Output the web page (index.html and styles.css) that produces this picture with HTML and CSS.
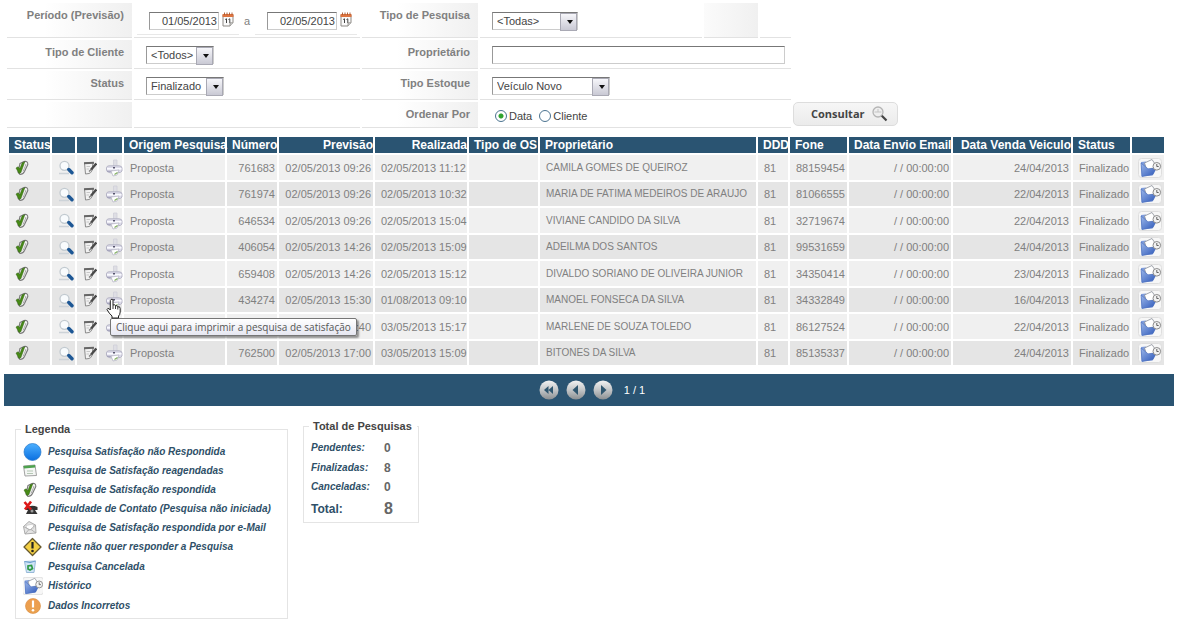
FILE: index.html
```html
<!DOCTYPE html>
<html lang="pt-BR">
<head>
<meta charset="utf-8">
<title>Pesquisa de Satisfação</title>
<link rel="stylesheet" href="styles.css">
</head>
<body>
<svg class="sprite" aria-hidden="true">
  <defs>
    <linearGradient id="g-folder" x1="0" y1="0" x2="1" y2="1"><stop offset="0" stop-color="#9db8ea"/><stop offset="1" stop-color="#2a55b8"/></linearGradient>
    <linearGradient id="g-ball" x1="0" y1="0" x2="0" y2="1"><stop offset="0" stop-color="#4db0ff"/><stop offset="1" stop-color="#0a6fe0"/></linearGradient>
    <linearGradient id="g-pager" x1="0" y1="0" x2="0" y2="1"><stop offset="0" stop-color="#f2f2f2"/><stop offset="0.5" stop-color="#c2c5c7"/><stop offset="1" stop-color="#8b8f92"/></linearGradient>
    <linearGradient id="g-orange" x1="0" y1="0" x2="0" y2="1"><stop offset="0" stop-color="#ee9c4e"/><stop offset="1" stop-color="#e9a24f"/></linearGradient>
  </defs>
  <symbol id="i-check" viewBox="0 0 14 16">
    <path d="M5 3.500 L9 1.500 Q13 .8 12.800 4.500 L9.500 11.500 Q8 14.500 5 14.500 L3 12Z" fill="#f4f4f4" stroke="#777" stroke-width="1.100"/>
    <path d="M10.800 4 Q11 5 8 11.500" fill="none" stroke="#999" stroke-width=".8"/>
    <path d="M1 8 L3.200 6.800 L4.800 8.800 L7.200 2.800 L9.800 1.800 L5.800 12.800 L4 13.500 Z" fill="#478a16" stroke="#2f5f10" stroke-width=".5"/>
  </symbol>
  <symbol id="i-search" viewBox="0 0 16 15">
    <path d="M1 13.500 H11" stroke="#cdd3d8" stroke-width="1.500"/>
    <circle cx="6.500" cy="5.800" r="4.500" fill="#f8fbfd" stroke="#c2cad0" stroke-width="1.300"/>
    <path d="M10.800 9.500 L14 12.800" stroke="#1d5795" stroke-width="3.400" stroke-linecap="round"/>
  </symbol>
  <symbol id="i-edit" viewBox="0 0 14 14">
    <path d="M1.500 2 L10 1.500 L9 9.500 Q8 12 6 12.500 L2.500 13 Z" fill="#f2f2f2" stroke="#8c8c8c"/>
    <path d="M1 2.300 L11 1.700" stroke="#666" stroke-width="2"/>
    <path d="M3.500 5.500 H7 M3.500 8 H6" stroke="#bbb" stroke-width=".8"/>
    <path d="M13.300 2.500 L8 8.800" stroke="#4a4a4a" stroke-width="2.300"/>
    <path d="M8.300 8.300 L6 10.500" stroke="#777" stroke-width="1.200"/>
  </symbol>
  <symbol id="i-print" viewBox="0 0 18 18">
    <path d="M8.500 1 H12 V8 H8.500Z" fill="#dedee4" stroke="#cfcfd8" stroke-width=".8"/>
    <path d="M1.500 8.500 Q2 6.800 4 6.800 H14 Q17 7 17 9 V12 Q16 13.800 13 13.800 H5 Q1.500 13 1.500 11Z" fill="#dcdbe8" stroke="#a9a8bc" stroke-width=".8"/>
    <path d="M2 9.800 H16.500" stroke="#fafaff" stroke-width="1.600"/>
    <path d="M8 8.800 H10" stroke="#55536b" stroke-width="1.500"/>
    <path d="M2 12.300 H8" stroke="#a3a2ba" stroke-width="1.200"/>
    <path d="M6 12 L14 11 L12 16 L8 17Z" fill="#fff" stroke="#b8b8c6" stroke-width=".8"/>
    <path d="M9.500 15.500 L12.500 13.500" stroke="#7fae5c" stroke-width="1.200"/>
  </symbol>
  <symbol id="i-history" viewBox="0 0 24 20">
    <rect x=".5" y=".5" width="23" height="19" rx="3" fill="#f7f7f7" stroke="#dedede"/>
    <path d="M3 4 L8 3.500 L10 8 L18 10 L14.500 17.500 L3.500 18.500Z" fill="#7f9ddc"/>
    <path d="M6.500 5 L14 1.500 L19 9 L9 12.500Z" fill="#fff" stroke="#8a8f99" stroke-width=".8"/>
    <path d="M3 5 L10 10.800 L18.500 9.800 L15 16.500 L4 18.500Z" fill="url(#g-folder)" stroke="#4a6dba" stroke-width=".6"/>
    <circle cx="18.800" cy="8.300" r="3.800" fill="#f2f2f2" stroke="#8b8b8b"/>
    <path d="M18.800 6 V8.500 H20.700" stroke="#555" stroke-width=".9" fill="none"/>
  </symbol>
  <symbol id="i-calendar" viewBox="0 0 12 15">
    <path d="M1 3 H11 V10.500 L8 14 H1Z" fill="#fafafa" stroke="#8e8a86"/>
    <path d="M.5 2 H11.500 V5 H.5Z" fill="#dd7440"/>
    <path d="M2.500 .5V3 M5 .5V3 M7.500 .5V3 M10 .5V3" stroke="#a8562c" stroke-width=".9"/>
    <path d="M3.200 7.500 L4.500 6.800 V11 M6.500 7.500 L7.800 6.800 V11" stroke="#444" fill="none"/>
    <path d="M8 14 V10.800 H11" fill="#d2d2d2" stroke="#8e8a86" stroke-width=".8"/>
  </symbol>
  <symbol id="i-hand" viewBox="0 0 16 21">
    <path d="M5 1.500 Q6.500 .5 7 2 V7 Q9 6 9.500 7.800 Q11.200 7 11.800 8.800 Q14 8 14.200 10.500 V14 Q14 17 12.500 18 V20 H6 V18 Q3 15.500 1 11.500 Q1.500 9.500 3.500 11 L4.300 12 V2.500Z" fill="#fff" stroke="#222" stroke-linejoin="round"/>
    <path d="M7 7V11 M9.500 8V11 M11.800 9V11.500" stroke="#222" stroke-width=".9"/>
  </symbol>
  <symbol id="i-first" viewBox="0 0 20 20"><circle cx="10" cy="10" r="9.500" fill="url(#g-pager)"/><path d="M9.500 6 V14 L5 10Z M14 6 V14 L9.500 10Z" fill="#2f566f"/></symbol>
  <symbol id="i-prev" viewBox="0 0 20 20"><circle cx="10" cy="10" r="9.500" fill="url(#g-pager)"/><path d="M12 5 V15 L6.500 10Z" fill="#2f566f"/></symbol>
  <symbol id="i-next" viewBox="0 0 20 20"><circle cx="10" cy="10" r="9.500" fill="url(#g-pager)"/><path d="M8 5 V15 L13.500 10Z" fill="#2f566f"/></symbol>
</svg>

<main class="page">
  <form class="filters">
    <label class="name" for="date-from">Período (Previsão)</label>
    <div class="value dates">
      <span class="date"><input class="text" id="date-from" value="01/05/2013"><svg class="calendar"><use href="#i-calendar"/></svg></span>
      <span class="until">a</span>
      <span class="date"><input class="text" value="02/05/2013" aria-label="Data final"><svg class="calendar"><use href="#i-calendar"/></svg></span>
    </div>
    <label class="name" for="survey">Tipo de Pesquisa</label>
    <div class="value first"><span class="select survey"><select id="survey"><option>&lt;Todas&gt;</option></select></span></div>
    <div class="name spare"></div>
    <div class="value"></div>

    <label class="name row-start" for="client">Tipo de Cliente</label>
    <div class="value"><span class="select client"><select id="client"><option>&lt;Todos&gt;</option></select></span></div>
    <label class="name" for="owner">Proprietário</label>
    <div class="value wide"><input class="text owner" id="owner"></div>

    <label class="name row-start" for="status">Status</label>
    <div class="value"><span class="select status"><select id="status"><option>Finalizado</option></select></span></div>
    <label class="name" for="stock">Tipo Estoque</label>
    <div class="value wide"><span class="select stock"><select id="stock"><option>Veículo Novo</option></select></span></div>

    <div class="name row-start"></div>
    <div class="value"></div>
    <div class="name">Ordenar Por</div>
    <div class="value wide radios">
      <label><input type="radio" name="order" checked>Data</label>
      <label><input type="radio" name="order">Cliente</label>
    </div>
    <button class="submit" type="button">Consultar
      <svg class="lens" viewBox="0 0 16 16"><circle cx="6" cy="6" r="5" fill="#eee" stroke="#b5b5b5" stroke-width="1.300"/><path d="M2.500 6 H9.500 M6 3V6" stroke="#c4c4c4"/><path d="M9.800 9.800 L14.500 14.500" stroke="#444" stroke-width="2.200"/></svg>
    </button>
  </form>

  <table class="results">
    <colgroup>
      <col class="c-41"><col class="c-23"><col class="c-20"><col class="c-23"><col class="c-101"><col class="c-50"><col class="c-94"><col class="c-92"><col class="c-69"><col class="c-216"><col class="c-30"><col class="c-57"><col class="c-102"><col class="c-118"><col class="c-57"><col class="c-32">
    </colgroup>
    <thead>
      <tr><th>Status</th><th></th><th></th><th></th><th>Origem Pesquisa</th><th class="num">Número</th><th class="num">Previsão</th><th class="num">Realizada</th><th>Tipo de OS</th><th>Proprietário</th><th>DDD</th><th>Fone</th><th class="num">Data Envio Email</th><th class="num">Data Venda Veiculo</th><th>Status</th><th></th></tr>
    </thead>
    <tbody>
      <tr><td><svg class="check"><use href="#i-check"/></svg></td><td><svg class="search"><use href="#i-search"/></svg></td><td><svg class="edit"><use href="#i-edit"/></svg></td><td><svg class="print"><use href="#i-print"/></svg></td><td>Proposta</td><td class="num">761683</td><td class="num">02/05/2013 09:26</td><td class="num">02/05/2013 11:12</td><td></td><td class="person">CAMILA GOMES DE QUEIROZ</td><td>81</td><td>88159454</td><td class="num">/ / 00:00:00</td><td class="num">24/04/2013</td><td>Finalizado</td><td><svg class="history"><use href="#i-history"/></svg></td></tr>
      <tr><td><svg class="check"><use href="#i-check"/></svg></td><td><svg class="search"><use href="#i-search"/></svg></td><td><svg class="edit"><use href="#i-edit"/></svg></td><td><svg class="print"><use href="#i-print"/></svg></td><td>Proposta</td><td class="num">761974</td><td class="num">02/05/2013 09:26</td><td class="num">02/05/2013 10:32</td><td></td><td class="person">MARIA DE FATIMA MEDEIROS DE ARAUJO</td><td>81</td><td>81066555</td><td class="num">/ / 00:00:00</td><td class="num">22/04/2013</td><td>Finalizado</td><td><svg class="history"><use href="#i-history"/></svg></td></tr>
      <tr><td><svg class="check"><use href="#i-check"/></svg></td><td><svg class="search"><use href="#i-search"/></svg></td><td><svg class="edit"><use href="#i-edit"/></svg></td><td><svg class="print"><use href="#i-print"/></svg></td><td>Proposta</td><td class="num">646534</td><td class="num">02/05/2013 09:26</td><td class="num">02/05/2013 15:04</td><td></td><td class="person">VIVIANE CANDIDO DA SILVA</td><td>81</td><td>32719674</td><td class="num">/ / 00:00:00</td><td class="num">22/04/2013</td><td>Finalizado</td><td><svg class="history"><use href="#i-history"/></svg></td></tr>
      <tr><td><svg class="check"><use href="#i-check"/></svg></td><td><svg class="search"><use href="#i-search"/></svg></td><td><svg class="edit"><use href="#i-edit"/></svg></td><td><svg class="print"><use href="#i-print"/></svg></td><td>Proposta</td><td class="num">406054</td><td class="num">02/05/2013 14:26</td><td class="num">02/05/2013 15:09</td><td></td><td class="person">ADEILMA DOS SANTOS</td><td>81</td><td>99531659</td><td class="num">/ / 00:00:00</td><td class="num">24/04/2013</td><td>Finalizado</td><td><svg class="history"><use href="#i-history"/></svg></td></tr>
      <tr><td><svg class="check"><use href="#i-check"/></svg></td><td><svg class="search"><use href="#i-search"/></svg></td><td><svg class="edit"><use href="#i-edit"/></svg></td><td><svg class="print"><use href="#i-print"/></svg></td><td>Proposta</td><td class="num">659408</td><td class="num">02/05/2013 14:26</td><td class="num">02/05/2013 15:12</td><td></td><td class="person">DIVALDO SORIANO DE OLIVEIRA JUNIOR</td><td>81</td><td>34350414</td><td class="num">/ / 00:00:00</td><td class="num">23/04/2013</td><td>Finalizado</td><td><svg class="history"><use href="#i-history"/></svg></td></tr>
      <tr><td><svg class="check"><use href="#i-check"/></svg></td><td><svg class="search"><use href="#i-search"/></svg></td><td><svg class="edit"><use href="#i-edit"/></svg></td><td class="hovered"><svg class="print"><use href="#i-print"/></svg><span class="tooltip" role="tooltip">Clique aqui para imprimir a pesquisa de satisfação</span><svg class="hand"><use href="#i-hand"/></svg></td><td>Proposta</td><td class="num">434274</td><td class="num">02/05/2013 15:30</td><td class="num">01/08/2013 09:10</td><td></td><td class="person">MANOEL FONSECA DA SILVA</td><td>81</td><td>34332849</td><td class="num">/ / 00:00:00</td><td class="num">16/04/2013</td><td>Finalizado</td><td><svg class="history"><use href="#i-history"/></svg></td></tr>
      <tr><td><svg class="check"><use href="#i-check"/></svg></td><td><svg class="search"><use href="#i-search"/></svg></td><td><svg class="edit"><use href="#i-edit"/></svg></td><td><svg class="print"><use href="#i-print"/></svg></td><td></td><td></td><td class="num">:40</td><td class="num">03/05/2013 15:17</td><td></td><td class="person">MARLENE DE SOUZA TOLEDO</td><td>81</td><td>86127524</td><td class="num">/ / 00:00:00</td><td class="num">22/04/2013</td><td>Finalizado</td><td><svg class="history"><use href="#i-history"/></svg></td></tr>
      <tr><td><svg class="check"><use href="#i-check"/></svg></td><td><svg class="search"><use href="#i-search"/></svg></td><td><svg class="edit"><use href="#i-edit"/></svg></td><td><svg class="print"><use href="#i-print"/></svg></td><td>Proposta</td><td class="num">762500</td><td class="num">02/05/2013 17:00</td><td class="num">03/05/2013 15:09</td><td></td><td class="person">BITONES DA SILVA</td><td>81</td><td>85135337</td><td class="num">/ / 00:00:00</td><td class="num">24/04/2013</td><td>Finalizado</td><td><svg class="history"><use href="#i-history"/></svg></td></tr>
    </tbody>
  </table>

  <nav class="pager">
    <button type="button" aria-label="Primeira página"><svg><use href="#i-first"/></svg></button>
    <button type="button" aria-label="Página anterior"><svg><use href="#i-prev"/></svg></button>
    <button type="button" aria-label="Próxima página"><svg><use href="#i-next"/></svg></button>
    <span class="count">1 / 1</span>
  </nav>

  <div class="panels">
    <fieldset class="panel legend">
      <legend>Legenda</legend>
      <ul>
        <li><svg viewBox="0 0 20 20"><circle cx="9.500" cy="10" r="8.500" fill="url(#g-ball)" stroke="#2a78c8" stroke-width=".7"/></svg>Pesquisa Satisfação não Respondida</li>
        <li><svg viewBox="0 0 20 20"><path d="M.5 5 L12 4 L13.500 14.500 L2 15Z" fill="#f4f6f4" stroke="#999" stroke-width=".9"/><path d="M.5 5 L12 4 L12.200 6.500 L1 7.500Z" fill="#4ea24e"/><path d="M4 10 H10 M4 12.500 H10" stroke="#b5c8b5"/></svg>Pesquisa de Satisfação reagendadas</li>
        <li><svg viewBox="0 -2 20 20"><use href="#i-check" width="14" height="16"/></svg>Pesquisa de Satisfação respondida</li>
        <li><svg viewBox="0 0 20 20"><path d="M3 9 Q8 5 14.500 8 V11 H12 L14.500 15 H3 L5 11 H3Z" fill="#333"/><circle cx="9" cy="12" r="1.500" fill="#999"/><path d="M1.500 3 L8 10.500 M8 2.500 L2 10.500" stroke="#dd1a1a" stroke-width="2.600"/></svg>Dificuldade de Contato (Pesquisa não iniciada)</li>
        <li><svg viewBox="0 0 20 20"><path d="M.5 8.500 L6 3.500 L12.500 7 L13 15 L2 16Z" fill="#e4e4e4" stroke="#a5a5a5" stroke-width=".9"/><path d="M3 7.500 L10 6 L11 10 L7 12 L3.500 10Z" fill="#fff" stroke="#bbb" stroke-width=".6"/><path d="M.5 8.500 L7 12 L12.500 7 M2 16 L6 11.500 M13 15 L8 11.500" fill="none" stroke="#a5a5a5" stroke-width=".8"/></svg>Pesquisa de Satisfação respondida por e-Mail</li>
        <li class="tall"><svg viewBox="0 0 20 20"><path d="M9.500 1.500 L18 10 L9.500 18.500 L1 10Z" fill="#f3cf45" stroke="#66582b" stroke-width="1.300" stroke-linejoin="round"/><path d="M9.500 5 V11.500" stroke="#222" stroke-width="2.200"/><circle cx="9.500" cy="14" r="1.300" fill="#222"/></svg>Cliente não quer responder a Pesquisa</li>
        <li><svg viewBox="0 0 20 20"><path d="M1.500 4.500 L12.500 4 L11 15.500 H3.500Z" fill="#cfe4f6" stroke="#8fb2d4" stroke-width=".9"/><path d="M1.500 4.500 Q7 7 12.500 4" fill="none" stroke="#6fa0d0"/><path d="M5 12 L5 9 L8.500 8.500 L9.500 11.500 L7 13Z" fill="none" stroke="#2f9a45" stroke-width="1.700"/></svg>Pesquisa Cancelada</li>
        <li class="tall"><svg viewBox="1 0 22 20"><use href="#i-history" width="24" height="20"/></svg>Histórico</li>
        <li class="tall"><svg viewBox="0 0 20 20"><circle cx="10" cy="10" r="7.500" fill="url(#g-orange)" stroke="#d98a3c" stroke-width=".6"/><path d="M10 4.500 V11.500" stroke="#fff" stroke-width="2.200"/><circle cx="10" cy="14.200" r="1.300" fill="#fff"/></svg>Dados Incorretos</li>
      </ul>
    </fieldset>

    <fieldset class="panel totals">
      <legend>Total de Pesquisas</legend>
      <dl>
        <dt>Pendentes:</dt><dd>0</dd>
        <dt>Finalizadas:</dt><dd>8</dd>
        <dt>Canceladas:</dt><dd>0</dd>
        <dt class="sum">Total:</dt><dd class="sum">8</dd>
      </dl>
    </fieldset>
  </div>
</main>
</body>
</html>
```
FILE: styles.css
```css
* { box-sizing: border-box; }

body {
  margin: 0;
  background: #fff;
  color: #808080;
  font: 11px/14px "Liberation Sans", Arial, sans-serif;
}

.sprite { position: absolute; width: 0; height: 0; }
svg { display: block; flex: none; }
.page { padding: 3px 4px 6px; }

/* Filters */
.filters {
  display: grid;
  grid-template-columns: 125px 226px 116px 222px 54px 31px auto;
  grid-template-rows: minmax(35px, auto) minmax(29px, auto) minmax(29px, auto) minmax(26px, auto);
  gap: 2px;
  justify-content: start;
  margin: 0 3px;
}
.name {
  padding: 5px 8px 0;
  border-bottom: 1px solid #e2e2e2;
  background: linear-gradient(to right, #fff 30%, #f0f0f0);
  color: #808080;
  font-weight: bold;
  text-align: right;
  white-space: nowrap;
}
.name.spare { background: linear-gradient(to right, #fbfbfb, #f0f0f0); }
.row-start { grid-column: 1; }
.value {
  display: flex;
  align-items: flex-start;
  padding: 6px 6px 4px 12px;
  border-bottom: 1px solid #e2e2e2;
}
.value.first { padding-top: 9px; }
.value.wide { grid-column: 4 / span 3; }
.value.dates { padding: 0 3px; justify-content: space-between; }
.date {
  display: flex;
  gap: 3px;
  width: 102px;
  padding: 9px 0 4px 12px;
  border-bottom: 1px solid #e8e8e8;
}
.until { padding-top: 11px; }
.calendar { width: 12px; height: 15px; }

.text,
.select select {
  height: 18px;
  margin: 0;
  border: 1px solid #ccc;
  border-top-color: #777;
  border-left-color: #999;
  border-radius: 0;
  background: #fff;
  color: #444;
  font: inherit;
}
.text { width: 70px; padding: 0 1px; text-align: right; }
.text.owner { width: 100%; text-align: left; }

.select { position: relative; display: flex; }
.select select { width: 100%; padding: 0 4px; appearance: none; }
.select::before {
  content: "";
  position: absolute;
  top: 1px;
  right: 1px;
  width: 15px;
  height: 16px;
  border: 1px solid #a9a9b4;
  background: linear-gradient(#f6f6fa, #c9c9d4);
  pointer-events: none;
}
.select::after {
  content: "";
  position: absolute;
  top: 8px;
  right: 5px;
  border: 3px solid transparent;
  border-top: 4px solid #111;
  border-bottom: 0;
  pointer-events: none;
}
.client { width: 68px; }
.status { width: 78px; }
.survey { width: 86px; }
.stock { width: 118px; }

.value.radios { gap: 7px; padding: 7px 6px 0 15px; }
.radios label { display: flex; align-items: center; gap: 2px; color: #444; }
.radios input {
  width: 12px;
  height: 12px;
  margin: 0;
  appearance: none;
  border: 1px solid #4b7390;
  border-radius: 50%;
  background: #fff;
}
.radios input:checked { background: radial-gradient(circle, #2fa32f 0 2px, #fff 3px); }

.submit {
  display: flex;
  align-items: center;
  justify-content: space-between;
  width: 105px;
  height: 24px;
  padding: 0 9px 0 17px;
  border: 1px solid #ddd;
  border-radius: 5px;
  background: linear-gradient(#f6f6f6, #ebebeb);
  color: #444;
  font: bold 11px/14px "Open Sans", "Noto Sans", sans-serif;
}
.lens { width: 16px; height: 16px; }

/* Results */
.results {
  width: calc(100% - 11px);
  margin: 7px 8px 0 3px;
  table-layout: fixed;
  border-collapse: separate;
  border-spacing: 2px;
}
.c-20 { width: 20px; }
.c-23 { width: 23px; }
.c-30 { width: 30px; }
.c-32 { width: 32px; }
.c-41 { width: 41px; }
.c-50 { width: 50px; }
.c-57 { width: 57px; }
.c-69 { width: 69px; }
.c-92 { width: 92px; }
.c-94 { width: 94px; }
.c-101 { width: 101px; }
.c-102 { width: 102px; }
.c-118 { width: 118px; }
.c-216 { width: 216px; }

.results th {
  height: 16px;
  padding: 0 0 0 5px;
  background: #2a5472;
  color: #fff;
  font-size: 12px;
  text-align: left;
  white-space: nowrap;
}
.results td {
  height: 25px;
  padding: 0 2px 0 6px;
  background: #f0f0f0;
  white-space: nowrap;
}
.results tbody tr:nth-child(even) td { height: 24px; background: #e5e5e5; }
.results .num { text-align: right; }
.results .person { font-size: 10px; }
.check { width: 14px; height: 16px; }
.search { width: 16px; height: 15px; }
.edit { width: 14px; height: 14px; }
.print { width: 18px; height: 18px; }
.history { width: 24px; height: 20px; }

.hovered { position: relative; }
.tooltip {
  position: absolute;
  top: 30px;
  left: 11px;
  z-index: 1;
  padding: 1px 5px;
  border: 1px solid #767676;
  border-radius: 2px;
  background: linear-gradient(#fff, #e6e7f1);
  box-shadow: 2px 2px 2px rgba(0, 0, 0, 0.4);
  color: #555;
  font: 10px/14px "Open Sans", "Noto Sans", sans-serif;
}
.hand { position: absolute; top: 10px; left: 7px; z-index: 2; width: 16px; height: 21px; }

/* Pager */
.pager {
  display: flex;
  align-items: center;
  justify-content: center;
  gap: 7px;
  height: 32px;
  margin: 7px 0 0;
  padding-left: 6px;
  background: #2a5472;
  color: #fff;
}
.pager button { padding: 0; border: 0; background: none; }
.pager svg { width: 20px; height: 20px; }
.count { padding: 0 0 0 4px; }

/* Panels */
.panels { display: flex; align-items: flex-start; gap: 15px; padding: 13px 11px 0; }
.panel {
  min-width: 0;
  margin: 0;
  border: 1px solid #e4e4e4;
  color: #2f5068;
  font-size: 10px;
  font-weight: bold;
}
.panel legend { margin-left: 5px; padding: 0 5px 0 4px; color: #444; font-size: 11px; white-space: nowrap; }
.legend { width: 273px; margin-top: 3px; padding: 6px 0 2px; }
.legend ul { margin: 0; padding: 0 0 0 7px; list-style: none; font-style: italic; }
.legend li { display: flex; align-items: center; gap: 5px; height: 19px; white-space: nowrap; }
.legend .tall { height: 20px; }
.legend li svg { width: 20px; height: 20px; }
.totals { width: 116px; padding: 5px 0 2px 7px; }
.panel.totals legend { margin-left: -2px; }
.totals dl {
  display: grid;
  grid-template-columns: 73px auto;
  grid-template-rows: 20px 19px 20px 23px;
  align-items: center;
  margin: 0;
}
.totals dt { font-style: italic; }
.totals dt.sum { font-style: normal; font-size: 12px; }
.totals dd { margin: 0; color: #666; font-size: 12px; }
.totals dd.sum { font-size: 16px; }
```
